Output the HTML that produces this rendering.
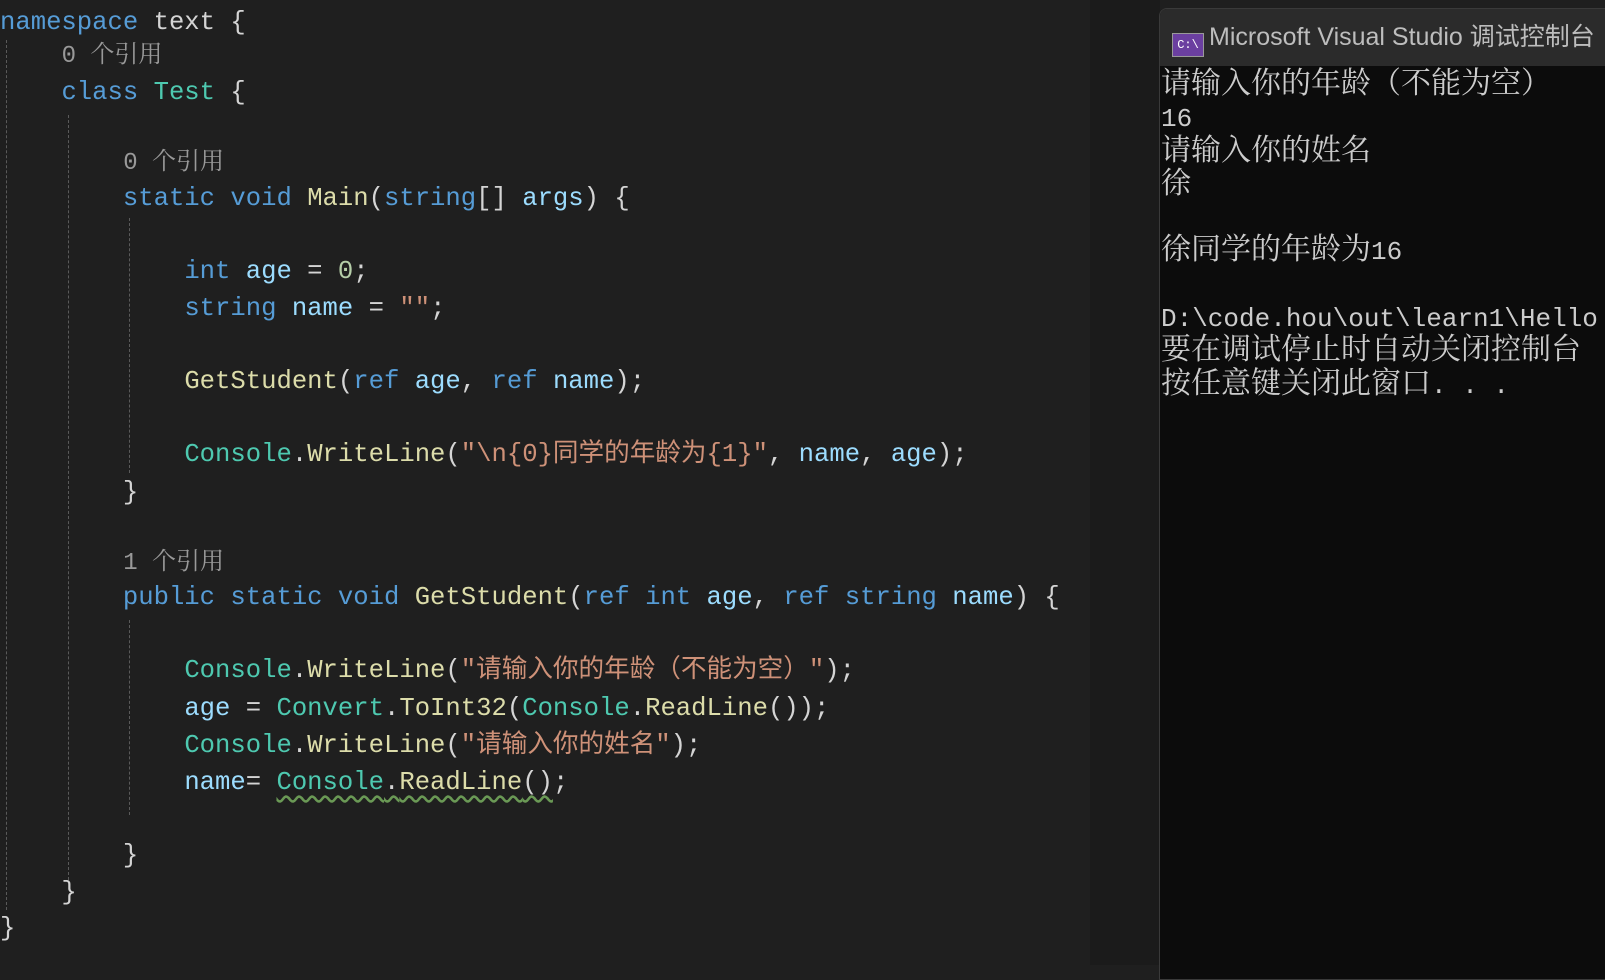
<!DOCTYPE html>
<html><head><meta charset="utf-8"><style>
body{margin:0;width:1605px;height:965px;background:#1f1f1f;overflow:hidden;position:relative;font-family:"Liberation Mono","Noto Sans CJK SC",monospace}
.l{position:absolute;left:0;white-space:pre;font-size:25.6px;line-height:38px;color:#d4d4d4;height:38px}
.cl{font-size:24px;color:#999;font-family:"Liberation Mono","Noto Serif CJK SC",monospace}
.k{color:#569cd6}.v{color:#9cdcfe}.t{color:#4ec9b0}.m{color:#dcdcaa}.s{color:#ce9178}.n{color:#b5cea8}
.g{position:absolute;width:0;border-left:1px dashed #5a5a5a}
.sq{text-decoration:underline wavy #6a9955;text-underline-offset:6px}
#side{position:absolute;left:1090px;top:0;width:70px;height:965px;background:#1b1b1b}
#con{position:absolute;left:1159px;top:8px;width:460px;height:970px;background:#0c0c0c;border:1px solid #3a3a3a;border-radius:8px 0 0 0;overflow:hidden}
#tb{height:57px;background:#2b2b2b;color:#bdbdbd;font-family:"Liberation Sans","Noto Sans CJK SC",sans-serif;font-size:25px;line-height:57px;padding-left:12px;white-space:nowrap}
.ic{display:inline-block;width:30px;height:22px;background:#6b3fa0;border:1px solid #999;vertical-align:-3px;margin-right:5px;color:#fff;font-size:12px;line-height:22px;text-align:center;font-family:"Liberation Mono",monospace}
#out{color:#ccc;font-family:"Noto Serif CJK SC",serif;font-size:30px;padding-left:1px;margin-top:-2px}
#out div{height:33.3px;line-height:33.3px;white-space:pre;overflow:visible}
.la{font-family:"Liberation Mono",monospace;font-size:26px}
</style></head><body>
<div id="side"></div>
<div class="g" style="left:6px;top:40px;height:870px"></div>
<div class="g" style="left:68px;top:115px;height:765px"></div>
<div class="g" style="left:129px;top:218px;height:255px"></div>
<div class="g" style="left:129px;top:620px;height:195px"></div>

<div class="l" style="top:4px"><span class="k">namespace</span> text {</div>
<div class="l cl" style="top:38px;left:4px">    0 个引用</div>
<div class="l" style="top:74px">    <span class="k">class</span> <span class="t">Test</span> {</div>
<div class="l cl" style="top:145px;left:8px">        0 个引用</div>
<div class="l" style="top:180px">        <span class="k">static void</span> <span class="m">Main</span>(<span class="k">string</span>[] <span class="v">args</span>) {</div>
<div class="l" style="top:253px">            <span class="k">int</span> <span class="v">age</span> = <span class="n">0</span>;</div>
<div class="l" style="top:290px">            <span class="k">string</span> <span class="v">name</span> = <span class="s">""</span>;</div>
<div class="l" style="top:363px">            <span class="m">GetStudent</span>(<span class="k">ref</span> <span class="v">age</span>, <span class="k">ref</span> <span class="v">name</span>);</div>
<div class="l" style="top:436px">            <span class="t">Console</span>.<span class="m">WriteLine</span>(<span class="s">"\n{0}同学的年龄为{1}"</span>, <span class="v">name</span>, <span class="v">age</span>);</div>
<div class="l" style="top:474px">        }</div>
<div class="l cl" style="top:545px;left:8px">        1 个引用</div>
<div class="l" style="top:579px">        <span class="k">public static void</span> <span class="m">GetStudent</span>(<span class="k">ref int</span> <span class="v">age</span>, <span class="k">ref string</span> <span class="v">name</span>) {</div>
<div class="l" style="top:652px">            <span class="t">Console</span>.<span class="m">WriteLine</span>(<span class="s">"请输入你的年龄（不能为空）"</span>);</div>
<div class="l" style="top:690px">            <span class="v">age</span> = <span class="t">Convert</span>.<span class="m">ToInt32</span>(<span class="t">Console</span>.<span class="m">ReadLine</span>());</div>
<div class="l" style="top:727px">            <span class="t">Console</span>.<span class="m">WriteLine</span>(<span class="s">"请输入你的姓名"</span>);</div>
<div class="l" style="top:764px">            <span class="v">name</span>= <span class="sq"><span class="t">Console</span>.<span class="m">ReadLine</span>()</span>;</div>
<div class="l" style="top:837px">        }</div>
<div class="l" style="top:874px">    }</div>
<div class="l" style="top:910px">}</div>

<div id="con"><div id="tb"><span class="ic">C:\</span>Microsoft Visual Studio 调试控制台</div>
<div id="out"><div>请输入你的年龄（不能为空）</div><div><span class="la">16</span></div><div>请输入你的姓名</div><div>徐</div><div> </div><div>徐同学的年龄为<span class="la">16</span></div><div> </div><div><span class="la">D:\code.hou\out\learn1\Hello</span></div><div>要在调试停止时自动关闭控制台</div><div>按任意键关闭此窗口<span class="la">. . .</span></div></div></div>
</body></html>
